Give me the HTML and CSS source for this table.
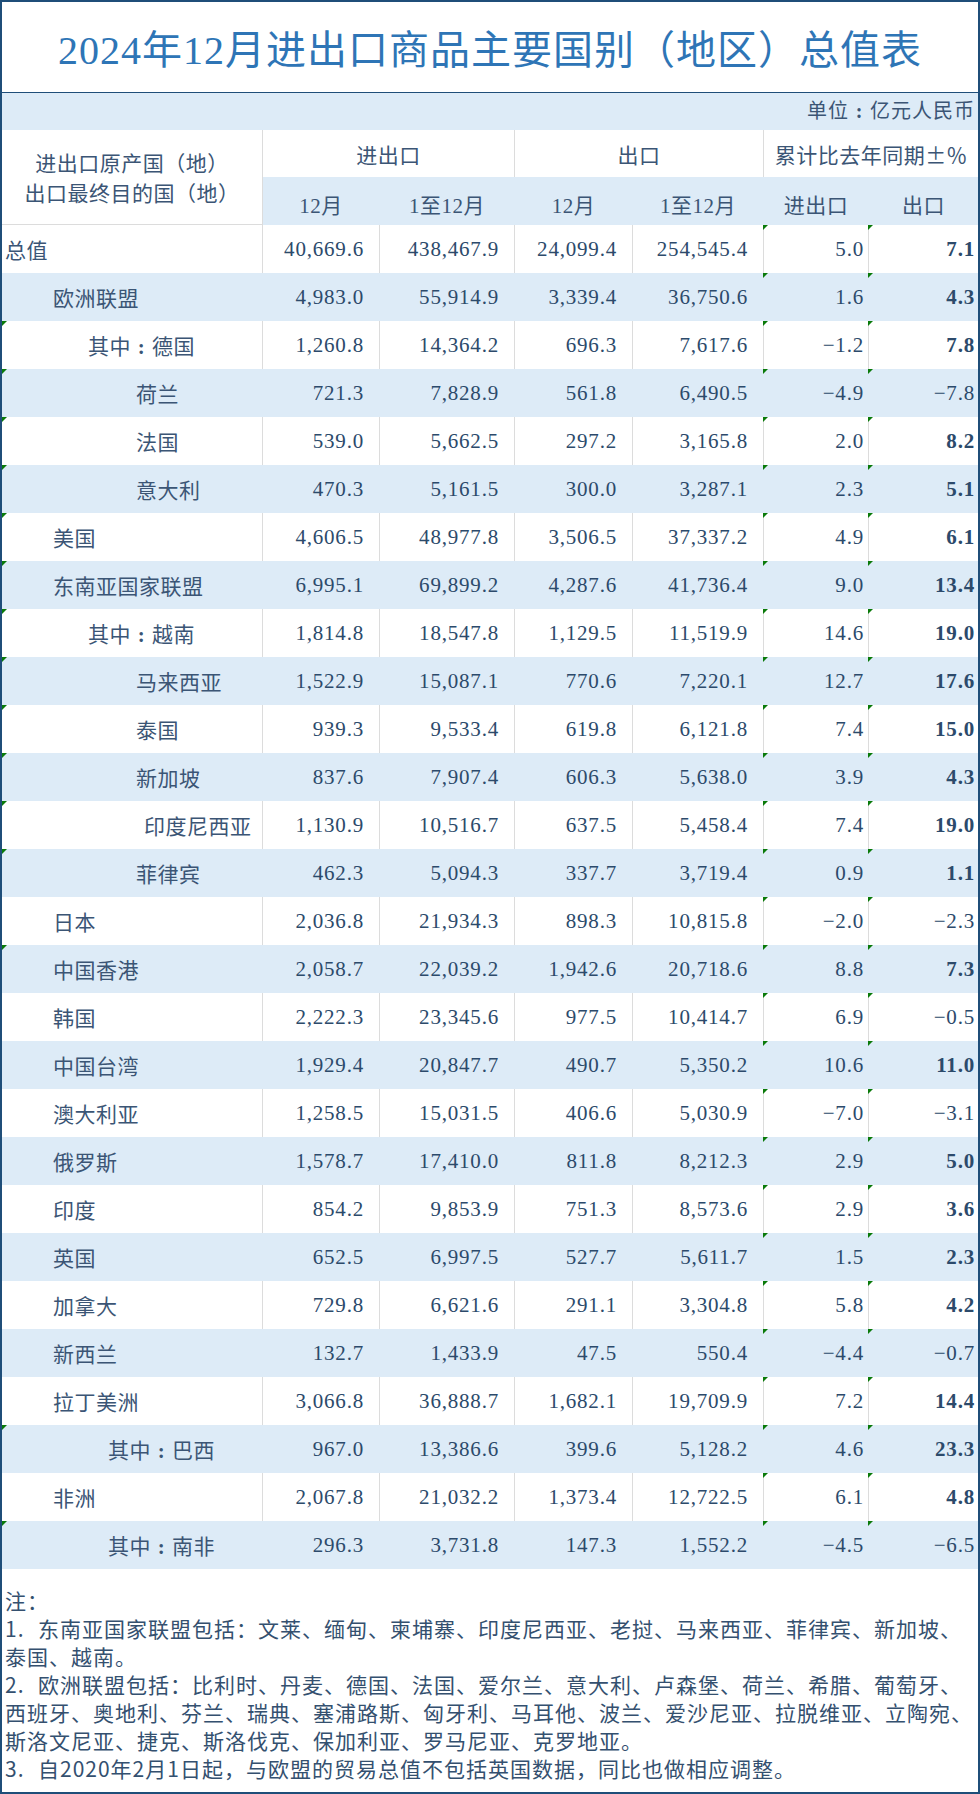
FILE: index.html
```html
<!DOCTYPE html>
<html lang="zh-CN">
<head>
<meta charset="utf-8">
<title>2024年12月进出口商品主要国别（地区）总值表</title>
<link rel="stylesheet" href="styles.css">
</head>
<body>
<div class="sheet">
  <h1 class="title">2024年12月进出口商品主要国别（地区）总值表</h1>
  <div class="unit">单位<span class="colon">:</span>亿元人民币</div>
  <table class="data">
    <colgroup>
      <col class="c-name"><col class="c-2"><col class="c-3"><col class="c-4"><col class="c-5"><col class="c-6"><col class="c-7">
    </colgroup>
    <thead>
      <tr class="h1">
        <th rowspan="2" class="name-h">进出口原产国（地）<br>出口最终目的国（地）</th>
        <th colspan="2">进出口</th>
        <th colspan="2">出口</th>
        <th colspan="2">累计比去年同期<span class="fw">±</span><span class="fw">％</span></th>
      </tr>
      <tr class="h2">
        <th class="first">12月</th><th>1至12月</th><th>12月</th><th>1至12月</th><th>进出口</th><th>出口</th>
      </tr>
    </thead>
    <tbody>
      <tr><td class="name l0">总值</td><td>40,669.6</td><td>438,467.9</td><td>24,099.4</td><td>254,545.4</td><td class="pct flag">5.0</td><td class="pct flag pos">7.1</td></tr>
      <tr><td class="name l1">欧洲联盟</td><td>4,983.0</td><td>55,914.9</td><td>3,339.4</td><td>36,750.6</td><td class="pct flag">1.6</td><td class="pct flag pos">4.3</td></tr>
      <tr><td class="name l2 flag">其中<span class="colon">:</span>德国</td><td>1,260.8</td><td>14,364.2</td><td>696.3</td><td>7,617.6</td><td class="pct flag">−1.2</td><td class="pct flag pos">7.8</td></tr>
      <tr><td class="name l3 flag">荷兰</td><td>721.3</td><td>7,828.9</td><td>561.8</td><td>6,490.5</td><td class="pct flag">−4.9</td><td class="pct flag">−7.8</td></tr>
      <tr><td class="name l3 flag">法国</td><td>539.0</td><td>5,662.5</td><td>297.2</td><td>3,165.8</td><td class="pct flag">2.0</td><td class="pct flag pos">8.2</td></tr>
      <tr><td class="name l3 flag">意大利</td><td>470.3</td><td>5,161.5</td><td>300.0</td><td>3,287.1</td><td class="pct flag">2.3</td><td class="pct flag pos">5.1</td></tr>
      <tr><td class="name l1 flag">美国</td><td>4,606.5</td><td>48,977.8</td><td>3,506.5</td><td>37,337.2</td><td class="pct flag">4.9</td><td class="pct flag pos">6.1</td></tr>
      <tr><td class="name l1 flag">东南亚国家联盟</td><td>6,995.1</td><td>69,899.2</td><td>4,287.6</td><td>41,736.4</td><td class="pct flag">9.0</td><td class="pct flag pos">13.4</td></tr>
      <tr><td class="name l2 flag">其中<span class="colon">:</span>越南</td><td>1,814.8</td><td>18,547.8</td><td>1,129.5</td><td>11,519.9</td><td class="pct flag">14.6</td><td class="pct flag pos">19.0</td></tr>
      <tr><td class="name l3 flag">马来西亚</td><td>1,522.9</td><td>15,087.1</td><td>770.6</td><td>7,220.1</td><td class="pct flag">12.7</td><td class="pct flag pos">17.6</td></tr>
      <tr><td class="name l3 flag">泰国</td><td>939.3</td><td>9,533.4</td><td>619.8</td><td>6,121.8</td><td class="pct flag">7.4</td><td class="pct flag pos">15.0</td></tr>
      <tr><td class="name l3 flag">新加坡</td><td>837.6</td><td>7,907.4</td><td>606.3</td><td>5,638.0</td><td class="pct flag">3.9</td><td class="pct flag pos">4.3</td></tr>
      <tr><td class="name l3b flag">印度尼西亚</td><td>1,130.9</td><td>10,516.7</td><td>637.5</td><td>5,458.4</td><td class="pct flag">7.4</td><td class="pct flag pos">19.0</td></tr>
      <tr><td class="name l3 flag">菲律宾</td><td>462.3</td><td>5,094.3</td><td>337.7</td><td>3,719.4</td><td class="pct flag">0.9</td><td class="pct flag pos">1.1</td></tr>
      <tr><td class="name l1">日本</td><td>2,036.8</td><td>21,934.3</td><td>898.3</td><td>10,815.8</td><td class="pct flag">−2.0</td><td class="pct flag">−2.3</td></tr>
      <tr><td class="name l1 flag">中国香港</td><td>2,058.7</td><td>22,039.2</td><td>1,942.6</td><td>20,718.6</td><td class="pct flag">8.8</td><td class="pct flag pos">7.3</td></tr>
      <tr><td class="name l1">韩国</td><td>2,222.3</td><td>23,345.6</td><td>977.5</td><td>10,414.7</td><td class="pct flag">6.9</td><td class="pct flag">−0.5</td></tr>
      <tr><td class="name l1">中国台湾</td><td>1,929.4</td><td>20,847.7</td><td>490.7</td><td>5,350.2</td><td class="pct flag">10.6</td><td class="pct flag pos">11.0</td></tr>
      <tr><td class="name l1">澳大利亚</td><td>1,258.5</td><td>15,031.5</td><td>406.6</td><td>5,030.9</td><td class="pct flag">−7.0</td><td class="pct flag">−3.1</td></tr>
      <tr><td class="name l1">俄罗斯</td><td>1,578.7</td><td>17,410.0</td><td>811.8</td><td>8,212.3</td><td class="pct flag">2.9</td><td class="pct flag pos">5.0</td></tr>
      <tr><td class="name l1">印度</td><td>854.2</td><td>9,853.9</td><td>751.3</td><td>8,573.6</td><td class="pct flag">2.9</td><td class="pct flag pos">3.6</td></tr>
      <tr><td class="name l1">英国</td><td>652.5</td><td>6,997.5</td><td>527.7</td><td>5,611.7</td><td class="pct flag">1.5</td><td class="pct flag pos">2.3</td></tr>
      <tr><td class="name l1">加拿大</td><td>729.8</td><td>6,621.6</td><td>291.1</td><td>3,304.8</td><td class="pct flag">5.8</td><td class="pct flag pos">4.2</td></tr>
      <tr><td class="name l1">新西兰</td><td>132.7</td><td>1,433.9</td><td>47.5</td><td>550.4</td><td class="pct flag">−4.4</td><td class="pct flag">−0.7</td></tr>
      <tr><td class="name l1">拉丁美洲</td><td>3,066.8</td><td>36,888.7</td><td>1,682.1</td><td>19,709.9</td><td class="pct flag">7.2</td><td class="pct flag pos">14.4</td></tr>
      <tr><td class="name l2b flag">其中<span class="colon">:</span>巴西</td><td>967.0</td><td>13,386.6</td><td>399.6</td><td>5,128.2</td><td class="pct flag">4.6</td><td class="pct flag pos">23.3</td></tr>
      <tr><td class="name l1">非洲</td><td>2,067.8</td><td>21,032.2</td><td>1,373.4</td><td>12,722.5</td><td class="pct flag">6.1</td><td class="pct flag pos">4.8</td></tr>
      <tr><td class="name l2b flag">其中<span class="colon">:</span>南非</td><td>296.3</td><td>3,731.8</td><td>147.3</td><td>1,552.2</td><td class="pct flag">−4.5</td><td class="pct flag">−6.5</td></tr>
    </tbody>
  </table>
  <div class="notes">
    <p>注：</p>
    <p><span class="num">1.</span>东南亚国家联盟包括：文莱、缅甸、柬埔寨、印度尼西亚、老挝、马来西亚、菲律宾、新加坡、</p>
    <p>泰国、越南。</p>
    <p><span class="num">2.</span>欧洲联盟包括：比利时、丹麦、德国、法国、爱尔兰、意大利、卢森堡、荷兰、希腊、葡萄牙、</p>
    <p>西班牙、奥地利、芬兰、瑞典、塞浦路斯、匈牙利、马耳他、波兰、爱沙尼亚、拉脱维亚、立陶宛、</p>
    <p>斯洛文尼亚、捷克、斯洛伐克、保加利亚、罗马尼亚、克罗地亚。</p>
    <p><span class="num">3.</span>自2020年2月1日起，与欧盟的贸易总值不包括英国数据，同比也做相应调整。</p>
  </div>
</div>
</body>
</html>
```

FILE: styles.css
```css
* {
  box-sizing: border-box;
}

body {
  margin: 0;
  background: #ffffff;
}

.sheet {
  width: 980px;
  height: 1794px;
  border: 2px solid #1f4e79;
  font-family: "Liberation Serif", "Noto Sans CJK SC", serif;
  color: #2c4a6b;
  overflow: hidden;
}

.title {
  margin: 0;
  height: 91px;
  border-bottom: 1px solid #1f4e79;
  display: flex;
  align-items: center;
  justify-content: center;
  font-size: 40px;
  font-weight: normal;
  letter-spacing: 1px;
  color: #2e75b6;
}

.unit {
  height: 37px;
  line-height: 37px;
  background: #ddebf7;
  text-align: right;
  padding-right: 3px;
  font-size: 20px;
  letter-spacing: 1px;
  color: #3b5575;
}

/* full-width colon, centred in its em box as in the source font */
.colon {
  display: inline-block;
  width: 21px;
  text-align: center;
  font-weight: bold;
}

.fw {
  font-family: "Noto Sans CJK SC", sans-serif;
  display: inline-block;
  width: 21px;
  text-align: center;
}

.data {
  width: 976px;
  table-layout: fixed;
  border-collapse: separate;
  border-spacing: 0;
}

.c-name { width: 260px; }
.c-2 { width: 117px; }
.c-3 { width: 135px; }
.c-4 { width: 118px; }
.c-5 { width: 131px; }
.c-6 { width: 105px; }
.c-7 { width: 110px; }

.data th {
  font-weight: normal;
  font-size: 21px;
  letter-spacing: 0.5px;
  color: #3b5575;
  padding: 0;
  text-align: center;
  white-space: nowrap;
}

.h1 th {
  height: 47px;
  background: #ffffff;
  border-left: 1px solid #dcdcdc;
}

.h1 .name-h {
  border-left: none;
  border-bottom: 1px solid #dcdcdc;
  line-height: 30px;
  padding-top: 4px;
}

.h2 th {
  height: 48px;
  background: #ddebf7;
  border-left: 1px solid #ddebf7;
  padding-top: 6px;
}

.h2 th.first {
  border-left-color: #dcdcdc;
}

.data td {
  height: 48px;
  padding: 0 15px 0 0;
  border-left: 1px solid #dcdcdc;
  text-align: right;
  font-size: 21px;
  letter-spacing: 0.8px;
  white-space: nowrap;
  background: #ffffff;
}

.data tbody tr:nth-child(even) td {
  background: #ddebf7;
  border-left-color: #ddebf7;
}

.data td.name {
  border-left: none;
  padding-right: 0;
  text-align: left;
  letter-spacing: 0.5px;
  color: #3b5575;
}

.data td.l0 { padding-left: 3px; }
.data td.l1 { padding-left: 51px; }
.data td.l2 { padding-left: 86px; }
.data td.l2b { padding-left: 106px; }
.data td.l3 { padding-left: 134px; }
.data td.l3b { padding-left: 142px; }

.data td.pct {
  padding-right: 4px;
}

.data td.pct:last-child {
  padding-right: 3px;
}

.data td.pos {
  font-weight: bold;
}

.flag {
  position: relative;
}

.flag::before {
  content: "";
  position: absolute;
  left: -1px;
  top: 0;
  width: 0;
  height: 0;
  border-top: 5px solid #0a7a0a;
  border-right: 5px solid transparent;
}

.data td.name.flag::before {
  left: 0;
}

.notes {
  padding: 17px 0 0 3px;
  font-family: "Noto Sans CJK SC", sans-serif;
  font-size: 21px;
  line-height: 28px;
  letter-spacing: 1px;
  color: #34506f;
}

.notes p {
  margin: 0;
  white-space: nowrap;
}

.num {
  display: inline-block;
  width: 33px;
}
```
